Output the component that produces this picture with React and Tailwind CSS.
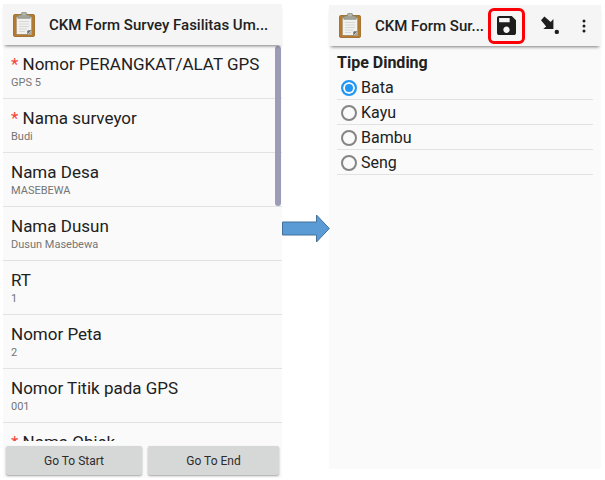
import React from "react";

const fields = [
  { label: "Nomor PERANGKAT/ALAT GPS", value: "GPS 5", required: true },
  { label: "Nama surveyor", value: "Budi", required: true },
  { label: "Nama Desa", value: "MASEBEWA" },
  { label: "Nama Dusun", value: "Dusun Masebewa" },
  { label: "RT", value: "1" },
  { label: "Nomor Peta", value: "2" },
  { label: "Nomor Titik pada GPS", value: "001" },
  { label: "Nama Objek", value: "", required: true },
];

const wallTypes = ["Bata", "Kayu", "Bambu", "Seng"];

function ClipboardIcon() {
  return (
    <svg className="h-[25px] w-[22px] shrink-0" viewBox="0 0 22 25" aria-hidden="true">
      <rect x="0.5" y="2.5" width="21" height="22" rx="1.2" fill="#b97a2b" stroke="#94651f" strokeWidth="0.8" />
      <path d="M3.3 4.5h15.4v18H3.3z" fill="#f1f1ef" stroke="#8a7350" strokeWidth="0.6" />
      <path d="M6 9.5h10M6 12h10M6 14.5h10M6 17h8M6 19.5h6" stroke="#d0d0ce" strokeWidth="0.8" />
      <path d="M18.7 18.3l-4.400 4.200v-3.200q0-1 1-1z" fill="#6f7068" />
      <path d="M18.9 18.6v4.100h-4.300z" fill="#a7a79f" />
      <path d="M4.800 6.300V4.200q0-1.200 1.300-1.200h2L8.800 0.600h4.400l0.700 2.400h2q1.300 0 1.300 1.200v2.100z" fill="#a3a597" stroke="#7b7d70" strokeWidth="0.6" />
      <path d="M9.200 2h3.600" stroke="#d5d6cd" strokeWidth="0.8" />
    </svg>
  );
}

function SaveIcon() {
  return (
    <svg className="h-[19px] w-[19px]" viewBox="3 3 18 18" fill="#1d1d1d" aria-hidden="true">
      <path d="M17 3H5c-1.110 0-2 .9-2 2v14c0 1.100.890 2 2 2h14c1.100 0 2-.9 2-2V7l-4-4zm-5 16c-1.660 0-3-1.340-3-3s1.340-3 3-3 3 1.340 3 3-1.340 3-3 3zm3-10H5V5h10v4z" />
    </svg>
  );
}

function JumpIcon() {
  return (
    <svg className="h-[19px] w-[19px]" viewBox="0 0 19 19" fill="#1d1d1d" aria-hidden="true">
      <path d="M3.400 0.500l6.300 5.500 2.700-2.900v10H2.200l3-2.700L0 4.200z" />
      <circle cx="15.800" cy="15.900" r="2.200" />
    </svg>
  );
}

function MoreIcon() {
  return (
    <svg className="h-[14px] w-1" viewBox="0 0 4 14" fill="#1d1d1d" aria-hidden="true">
      <circle cx="2" cy="2" r="1.500" />
      <circle cx="2" cy="7" r="1.500" />
      <circle cx="2" cy="12" r="1.500" />
    </svg>
  );
}

function AppBar({ title, children }) {
  return (
    <header className="relative z-10 flex h-[41px] shrink-0 items-center bg-[#f5f5f5] pl-[10px] shadow-[0_3px_3px_-2px_rgba(0,0,0,0.5)]">
      <ClipboardIcon />
      <h1 className="ml-[14px] min-w-0 flex-1 text-[15px] leading-6 font-medium whitespace-nowrap text-[#212121]">
        {title}
      </h1>
      {children}
    </header>
  );
}

function FieldRow({ label, value, required }) {
  return (
    <li className="h-[54px] shrink-0 border-b border-[#e2e2e2] px-2 pt-2">
      <div className="text-[17px] leading-[22px] whitespace-nowrap text-[#212121]">
        {required && <span className="text-[#f44336]">* </span>}
        {label}
      </div>
      <div className="text-[11px] leading-4 text-[#757575]">{value}</div>
    </li>
  );
}

function NavButton({ children }) {
  return (
    <button
      type="button"
      className="h-[29px] rounded-xs bg-[#d6d7d7] text-xs text-[#2c2c2c] shadow-[0_1px_2px_rgba(0,0,0,0.35)]"
    >
      {children}
    </button>
  );
}

export default function App() {
  return (
    <main className="flex h-screen bg-white pt-1 pr-1 pl-[3px] font-[Roboto,sans-serif]">
      <section className="mb-[2px] flex min-w-0 flex-[279] flex-col bg-[#fafafa]">
        <AppBar title="CKM Form Survey Fasilitas Um..." />
        <div className="relative min-h-0 flex-1 overflow-hidden">
          <ul className="flex flex-col">
            {fields.map((field) => (
              <FieldRow key={field.label} {...field} />
            ))}
          </ul>
          <div className="absolute top-px right-px h-40 w-[6px] rounded-full bg-[#9c9bb8]" />
        </div>
        <div className="grid grid-cols-[136fr_131fr] gap-[6px] px-[3px] pt-[5px] pb-[3px]">
          <NavButton>Go To Start</NavButton>
          <NavButton>Go To End</NavButton>
        </div>
      </section>

      <div className="w-[47px] shrink-0 pt-[210px]">
        <svg className="relative z-10 h-[29px] w-12 max-w-none" viewBox="0 0 48 29" aria-hidden="true">
          <path d="M0.500 8H34.500V1L47.300 14.500 34.500 28V21H0.500z" fill="#5b9bd5" stroke="#41719c" />
        </svg>
      </div>

      <section className="mt-px mb-[11px] flex min-w-0 flex-[272] flex-col bg-[#fafafa]">
        <AppBar title="CKM Form Sur...">
          <button
            type="button"
            aria-label="Save"
            className="ml-1 flex h-9 w-[37px] shrink-0 items-center justify-center rounded-md border-3 border-[#fb0006]"
          >
            <SaveIcon />
          </button>
          <button type="button" aria-label="Go to question" className="ml-4 shrink-0">
            <JumpIcon />
          </button>
          <button type="button" aria-label="More options" className="mr-[15px] ml-[22px] shrink-0">
            <MoreIcon />
          </button>
        </AppBar>
        <fieldset className="px-2 pt-1">
          <legend className="contents">
            <span className="block text-base leading-[25px] font-bold text-[#212121]">Tipe Dinding</span>
          </legend>
          {wallTypes.map((name, index) => (
            <label
              key={name}
              className="flex h-[25px] items-center gap-1 border-b border-[#e2e2e2] pt-px pl-1 text-base text-[#212121]"
            >
              <input
                type="radio"
                name="wall"
                defaultChecked={index === 0}
                className="m-0 size-4 shrink-0 appearance-none rounded-full border-2 border-[#858585] checked:border-[#2196f3] checked:bg-[#2196f3] checked:shadow-[inset_0_0_0_2px_#fafafa]"
              />
              {name}
            </label>
          ))}
        </fieldset>
      </section>
    </main>
  );
}
